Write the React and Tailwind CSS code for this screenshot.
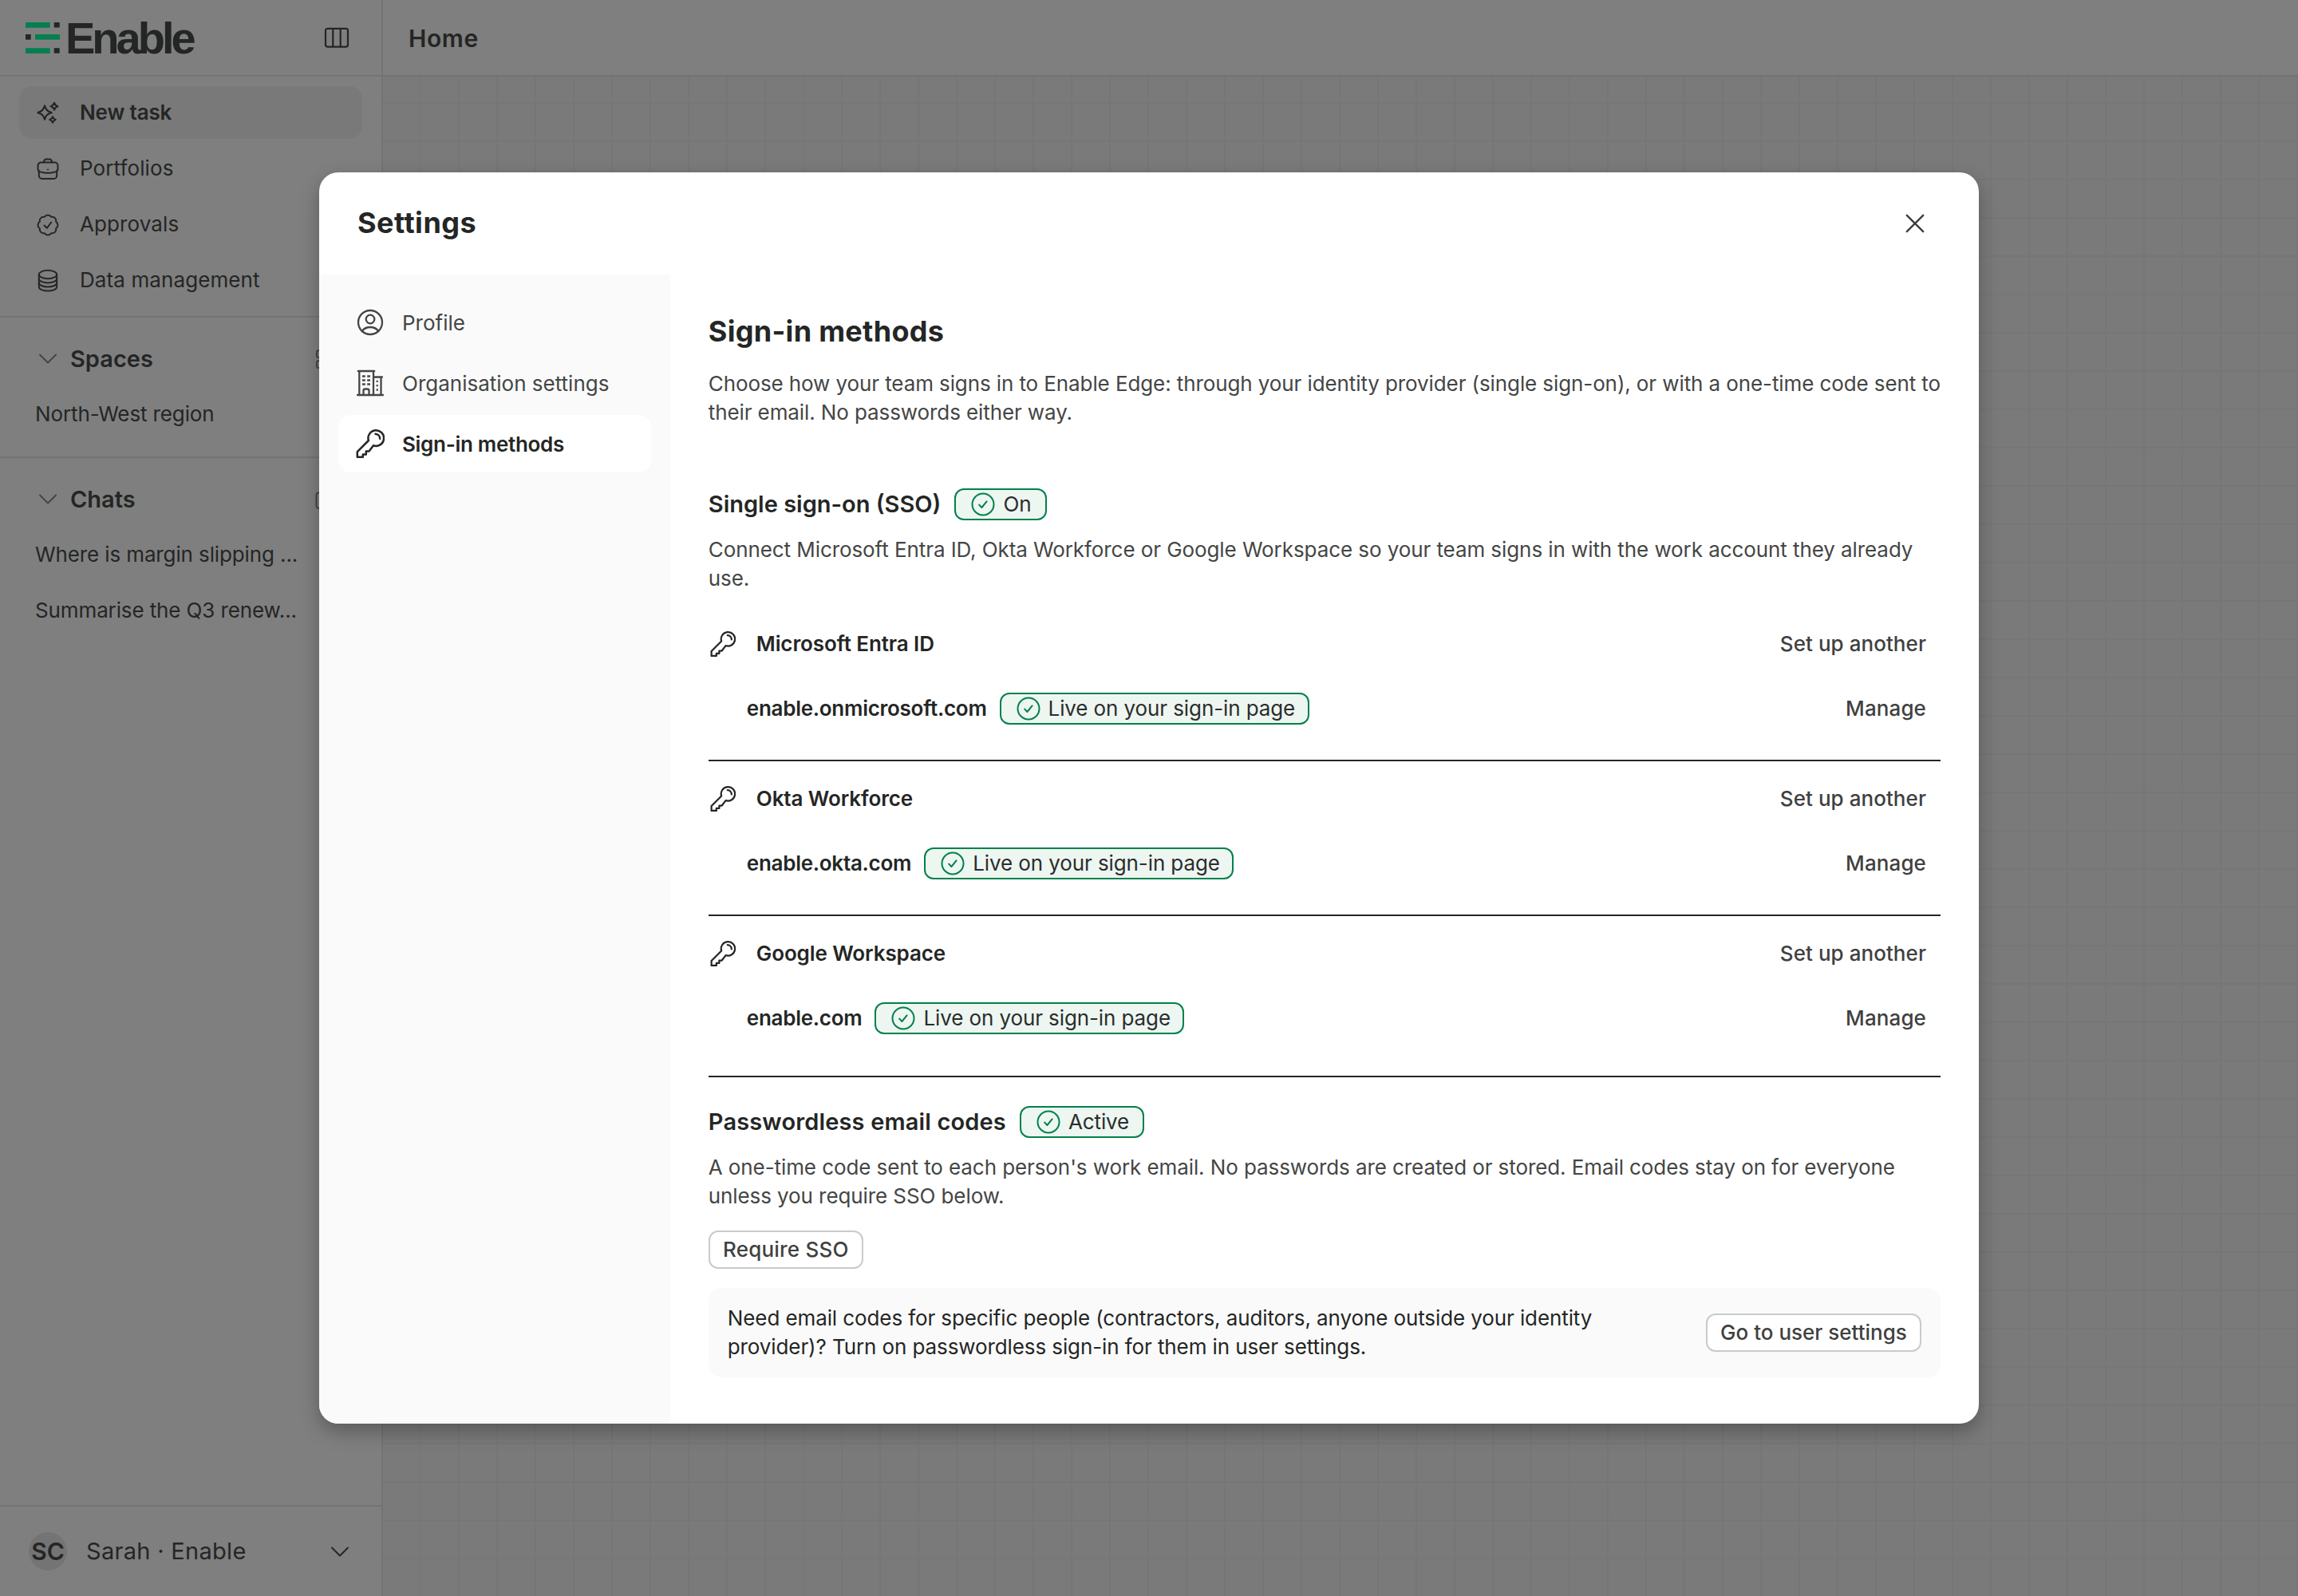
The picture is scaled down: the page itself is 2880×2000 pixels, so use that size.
import React from 'react'

// ---------- icons ----------

function Icon({ box, className, children, stroke = 2 }) {
    return (
        <svg
            viewBox={`0 0 ${box} ${box}`}
            className={`shrink-0 ${className}`}
            fill="none"
            stroke="currentColor"
            strokeWidth={stroke}
            strokeLinecap="round"
            strokeLinejoin="round"
        >
            {children}
        </svg>
    )
}

const SparklesIcon = () => (
    <Icon box={32} className="size-8" stroke={2.2}>
        <path d="M12 7.5c1.6 5.2 3.4 7 8.6 8.6-5.2 1.6-7 3.4-8.6 8.6-1.6-5.2-3.4-7-8.6-8.6 5.2-1.6 7-3.4 8.6-8.6z" />
        <path d="M24 3.8c.8 2.7 1.7 3.6 4.400 4.400-2.700.8-3.600 1.700-4.400 4.400-.8-2.700-1.700-3.600-4.400-4.400 2.700-.8 3.600-1.700 4.400-4.400z" />
        <path d="M22 21.300c.7 2.300 1.400 3 3.700 3.700-2.300.7-3 1.400-3.700 3.700-.7-2.300-1.400-3-3.700-3.700 2.300-.7 3-1.400 3.700-3.700z" />
    </Icon>
)

const BriefcaseIcon = () => (
    <Icon box={32} className="size-8">
        <path d="M11 8.5c0-2.5 1.200-4 3.200-4h3.600c2 0 3.200 1.500 3.200 4" />
        <path d="M7.500 8.500h17a4 4 0 0 1 4 4v4c0 2-1 3.200-3 3.900-5.500 1.700-13.500 1.700-19 0-2-.7-3-1.900-3-3.900v-4a4 4 0 0 1 4-4z" />
        <path d="M4.800 19.500v5.700a3.800 3.800 0 0 0 3.800 3.800h14.800a3.800 3.800 0 0 0 3.800-3.800v-5.700" />
        <path d="M16 17.500v.1" />
    </Icon>
)

const ApprovalIcon = () => (
    <Icon box={32} className="size-8">
        <g transform="translate(1 2) scale(1.25)" strokeWidth="1.6">
            <path d="M3.850 8.620a4 4 0 0 1 4.780-4.770 4 4 0 0 1 6.740 0 4 4 0 0 1 4.780 4.780 4 4 0 0 1 0 6.740 4 4 0 0 1-4.770 4.780 4 4 0 0 1-6.750 0 4 4 0 0 1-4.780-4.770 4 4 0 0 1 0-6.760Z" />
        </g>
        <path d="M11.500 17.500l3.300 3.300 5.500-7.300" />
    </Icon>
)

const DatabaseIcon = () => (
    <Icon box={32} className="size-8">
        <ellipse cx="16" cy="9" rx="11.200" ry="5.200" />
        <path d="M4.800 9v15.400c0 2.900 5 5.200 11.200 5.200s11.200-2.300 11.200-5.200V9" />
        <path d="M4.800 14.200c0 2.900 5 5.200 11.200 5.200s11.200-2.300 11.200-5.200" />
        <path d="M4.800 19.300c0 2.900 5 5.200 11.200 5.200s11.200-2.300 11.200-5.200" />
    </Icon>
)

const ColumnsIcon = () => (
    <Icon box={36} className="size-9" stroke={2.2}>
        <rect x="4" y="6.800" width="28" height="22.800" rx="2.500" />
        <path d="M13.300 6.800v22.800M22.700 6.800v22.800" />
    </Icon>
)

const ChevronIcon = ({ className }) => (
    <Icon box={32} className={`size-8 ${className}`}>
        <path d="M6 11.500l10 10 10-10" />
    </Icon>
)

const GridIcon = () => (
    <Icon box={32} className="size-8 text-[#888]">
        <rect x="3" y="6" width="9" height="9" rx="2.500" />
        <rect x="17" y="6" width="9" height="9" rx="2.500" />
        <rect x="3" y="19" width="9" height="9" rx="2.500" />
        <rect x="17" y="19" width="9" height="9" rx="2.500" />
    </Icon>
)

const ComposeIcon = () => (
    <Icon box={32} className="size-8 text-[#888]">
        <path d="M16 8.500H5.500a3 3 0 0 0-3 3V25a3 3 0 0 0 3 3H21a3 3 0 0 0 3-3v-8" />
        <path d="M12 20l1-4L25 4l3 3-12 12z" />
    </Icon>
)

const UserIcon = () => (
    <Icon box={36} className="size-9" stroke={2.3}>
        <circle cx="18" cy="18" r="15" />
        <circle cx="18" cy="14" r="5.300" />
        <path d="M7.700 29c2.300-3.300 6-5 10.300-5s8 1.700 10.300 5" />
    </Icon>
)

const BuildingIcon = () => (
    <Icon box={36} className="size-9" stroke={2.3}>
        <path d="M2 33h32M2.800 3h20.400M4.300 3v30M22 3v30M22 10.500h11M31.500 10.500V33" />
        <path d="M9.500 33v-5.500a2 2 0 0 1 2-2h3a2 2 0 0 1 2 2V33" />
        <path strokeLinecap="butt" d="M8 9.500h3.800M14.200 9.500H18M8 14.500h3.800M14.200 14.500H18M8 19.500h3.800M14.200 19.500H18" />
        <path strokeLinecap="butt" d="M25.600 15.800h2.200M25.600 21.200h2.200M25.600 26.500h2.200" />
    </Icon>
)

const KeyIcon = ({ className }) => (
    <Icon box={36} className={className} stroke={2.5}>
        <path d="M15.900 14L1.800 28.200v6.600h7v-3.400h4v-3.800h3.700l5.500-7.300a9.800 9.800 0 1 0-6.100-6.300z" />
        <path d="M24.500 5.700a6 6 0 0 1 5.700 6" />
    </Icon>
)

const CheckCircleIcon = () => (
    <Icon box={32} className="size-8 text-[#00814c]">
        <circle cx="16" cy="16" r="13.500" />
        <path d="M11.200 16.600l3.200 3.400 6.200-7.600" />
    </Icon>
)

const CloseIcon = () => (
    <Icon box={32} className="size-8 text-[#3c3e3d]" stroke={2.4}>
        <path d="M5.800 5.800l20.400 20.400M26.200 5.800L5.800 26.200" />
    </Icon>
)

function Logo() {
    return (
        <div className="flex items-center">
            <svg viewBox="0 0 43 39" className="h-[39px] w-[43px]">
                <g fill="#0affa0">
                    <rect x="0" y="0" width="30.700" height="6.800" />
                    <rect x="12" y="15" width="31" height="6.700" />
                    <rect x="0" y="32.200" width="30.700" height="6.800" />
                </g>
                <g fill="#484c4a">
                    <rect x="35.700" y="0" width="7" height="6.500" />
                    <rect x="0" y="15" width="6.700" height="6.700" />
                    <rect x="35.700" y="32.200" width="7" height="6.500" />
                </g>
            </svg>
            <span className="ml-[7px] pt-0.5 font-['Liberation_Sans',sans-serif] text-[56px] leading-[56px] font-bold tracking-[-4px]">
                Enable
            </span>
        </div>
    )
}

// ---------- page behind the dialog ----------

const navItems = [
    { label: 'New task', icon: <SparklesIcon />, active: true },
    { label: 'Portfolios', icon: <BriefcaseIcon /> },
    { label: 'Approvals', icon: <ApprovalIcon /> },
    { label: 'Data management', icon: <DatabaseIcon /> },
]

function SidebarSection({ title, items, action, className }) {
    return (
        <div className={`flex flex-col gap-1 pt-[18px] ${className}`}>
            <div className="flex h-[66px] items-center justify-between pr-[52px] pl-11">
                <div className="flex items-center gap-3">
                    <ChevronIcon className="text-[#888]" />
                    <h3 className="pt-px text-[29px] font-semibold">{title}</h3>
                </div>
                {action}
            </div>
            {items.map((item) => (
                <div key={item} className="flex h-[66px] items-center pb-px pl-11 tracking-[-0.12px] whitespace-nowrap">
                    {item}
                </div>
            ))}
        </div>
    )
}

function Sidebar() {
    return (
        <aside className="flex w-[480px] shrink-0 flex-col border-r-2 border-[#e6e6e6] bg-white">
            <div className="flex h-24 items-center justify-between border-b-2 border-[#e6e6e6] pr-[38px] pl-8">
                <Logo />
                <ColumnsIcon />
            </div>
            <nav className="flex flex-col gap-1 border-b-2 border-[#e6e6e6] px-6 py-3">
                {navItems.map((item) => (
                    <div
                        key={item.label}
                        className={`flex h-[66px] items-center gap-6 rounded-2xl pl-5 ${item.active ? 'bg-[#f2f2f2] font-semibold tracking-[-0.15px]' : 'tracking-[0.1px]'}`}
                    >
                        {item.icon}
                        <span className="pb-px">{item.label}</span>
                    </div>
                ))}
            </nav>
            <SidebarSection
                title="Spaces"
                items={['North-West region']}
                action={<GridIcon />}
                className="border-b-2 border-[#e6e6e6] pb-5"
            />
            <SidebarSection
                title="Chats"
                items={['Where is margin slipping ...', 'Summarise the Q3 renew...']}
                action={<ComposeIcon />}
                className=""
            />
            <div className="mt-auto flex h-[114px] items-center border-t-2 border-[#e6e6e6] pr-9 pl-9">
                <div className="flex size-12 items-center justify-center rounded-full bg-[#e8e8e8] text-[30px] font-semibold">
                    SC
                </div>
                <span className="ml-6 text-[29px] tracking-[0.3px]">Sarah · Enable</span>
                <ChevronIcon className="ml-auto" />
            </div>
        </aside>
    )
}

function MainArea() {
    return (
        <main className="flex flex-1 flex-col">
            <div className="flex h-24 items-center border-b-2 border-[#e6e6e6] bg-white pt-0.5 pl-8 text-[30px] font-semibold tracking-[0.6px]">
                Home
            </div>
            <div className="flex-1 bg-[#f4f4f4] bg-[linear-gradient(to_right,#ececec_2px,transparent_2px),linear-gradient(to_bottom,#ececec_2px,transparent_2px)] bg-[size:48px_48px] bg-[position:46px_32px]" />
        </main>
    )
}

// ---------- settings dialog ----------

const tabs = [
    { label: 'Profile', icon: <UserIcon /> },
    { label: 'Organisation settings', icon: <BuildingIcon /> },
    { label: 'Sign-in methods', icon: <KeyIcon className="size-9" />, active: true },
]

const providers = [
    { name: 'Microsoft Entra ID', domain: 'enable.onmicrosoft.com' },
    { name: 'Okta Workforce', domain: 'enable.okta.com' },
    { name: 'Google Workspace', domain: 'enable.com' },
]

function StatusBadge({ children, className }) {
    return (
        <span
            className={`flex h-10 items-center gap-[9px] rounded-xl border-2 border-[#00814c] bg-[#edf6f1] pl-[18px] text-[26px] font-normal tracking-[-0.1px] whitespace-nowrap text-[#2b2d2c] ${className}`}
        >
            <CheckCircleIcon />
            <span className="pb-0.5">{children}</span>
        </span>
    )
}

function OutlineButton({ children, className }) {
    return (
        <button
            className={`flex h-12 items-center justify-center rounded-xl border-2 border-[#c8cbca] bg-white pb-0.5 font-medium whitespace-nowrap text-[#3f4140] ${className}`}
        >
            {children}
        </button>
    )
}

function Provider({ provider, last }) {
    return (
        <div className={`flex flex-col gap-[25px] pt-[19px] pb-9 ${last ? '' : 'border-b-2 border-[#242625]'}`}>
            <div className="flex h-14 items-center justify-between pr-[18px]">
                <div className="flex items-center font-semibold tracking-[-0.1px]">
                    <KeyIcon className="mr-[26px] ml-0.5 size-8" />
                    <span className="pb-0.5">{provider.name}</span>
                </div>
                <button className="pb-0.5 font-medium tracking-[0.05px] text-[#3f4140]">Set up another</button>
            </div>
            <div className="flex h-14 items-center justify-between pr-[18px]">
                <div className="flex items-center gap-4 pl-12 font-semibold tracking-[-0.27px]">
                    <span className="pb-0.5">{provider.domain}</span>
                    <StatusBadge className="w-[388px]">Live on your sign-in page</StatusBadge>
                </div>
                <button className="pb-0.5 font-medium tracking-[0.1px] text-[#3f4140]">Manage</button>
            </div>
        </div>
    )
}

function SettingsDialog() {
    return (
        <div className="flex h-[1568px] w-[2080px] flex-col overflow-hidden rounded-3xl bg-white text-[#242625] shadow-[0_10px_24px_rgba(0,0,0,0.28)]">
            <div className="flex h-32 shrink-0 items-center justify-between pr-16 pl-12">
                <h1 className="pb-0.5 text-[36px] font-bold tracking-[0.5px]">Settings</h1>
                <CloseIcon />
            </div>
            <div className="flex flex-1">
                <div className="flex w-[440px] flex-col gap-1 bg-[#fafafa] p-6">
                    {tabs.map((tab) => (
                        <div
                            key={tab.label}
                            className={`flex h-[72px] items-center gap-[22px] rounded-2xl pl-[22px] ${tab.active ? 'bg-white font-semibold tracking-[-0.3px]' : 'text-[#444645]'}`}
                        >
                            {tab.icon}
                            {tab.label}
                        </div>
                    ))}
                </div>

                <div className="flex flex-1 flex-col px-12 pt-12">
                    <h2 className="text-[36px] leading-[46px] font-bold tracking-[0.3px]">Sign-in methods</h2>
                    <p className="mt-[25px] leading-9 tracking-[-0.1px] whitespace-nowrap text-[#444645]">
                        Choose how your team signs in to Enable Edge: through your identity provider (single sign-on), or with a one-time code sent to
                        <br />
                        their email. No passwords either way.
                    </p>

                    <div className="mt-[77px] flex h-10 items-center gap-[17px]">
                        <h3 className="text-[29px] font-semibold">Single sign-on (SSO)</h3>
                        <StatusBadge className="w-[116px]">On</StatusBadge>
                    </div>
                    <p className="mt-[19px] leading-9 tracking-[-0.08px] whitespace-nowrap text-[#444645]">
                        Connect Microsoft Entra ID, Okta Workforce or Google Workspace so your team signs in with the work account they already
                        <br />
                        use.
                    </p>

                    <div className="mt-[17px] mb-2">
                        {providers.map((provider, index) => (
                            <Provider
                                key={provider.domain}
                                provider={provider}
                                last={index === providers.length - 1}
                            />
                        ))}
                    </div>

                    <div className="border-t-2 border-[#242625] pt-9">
                        <div className="flex h-10 items-center gap-[17px]">
                            <h3 className="text-[29px] font-semibold tracking-[0.15px]">Passwordless email codes</h3>
                            <StatusBadge className="w-[156px]">Active</StatusBadge>
                        </div>
                        <p className="mt-[19px] leading-9 tracking-[-0.09px] whitespace-nowrap text-[#444645]">
                            A one-time code sent to each person's work email. No passwords are created or stored. Email codes stay on for everyone
                            <br />
                            unless you require SSO below.
                        </p>
                        <OutlineButton className="mt-[25px] w-[194px] tracking-[0.2px]">Require SSO</OutlineButton>
                        <div className="mt-6 flex h-28 items-center justify-between rounded-2xl bg-[#fafafa] pr-6 pl-6">
                            <p className="leading-9 tracking-[-0.1px] whitespace-nowrap">
                                Need email codes for specific people (contractors, auditors, anyone outside your identity
                                <br />
                                provider)? Turn on passwordless sign-in for them in user settings.
                            </p>
                            <OutlineButton className="w-[270px]">Go to user settings</OutlineButton>
                        </div>
                    </div>
                </div>
            </div>
        </div>
    )
}

export default function App() {
    return (
        <div className="relative flex h-[2000px] w-[2880px] overflow-hidden font-['Inter',sans-serif] text-[26px] text-[#484c4a]">
            <Sidebar />
            <MainArea />
            <div className="absolute inset-0 flex items-center justify-center bg-black/50">
                <SettingsDialog />
            </div>
        </div>
    )
}
